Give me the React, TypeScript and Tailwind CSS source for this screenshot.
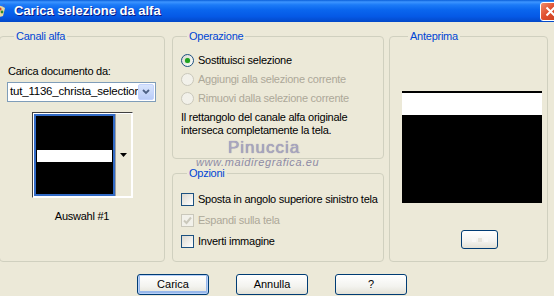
import { ReactNode } from 'react';

const ui = { fontFamily: '"Liberation Sans", Arial, sans-serif' };

function GroupBox({ title, className, children }: { title: string; className: string; children?: ReactNode }) {
  return (
    <fieldset className={`border border-[#D0D0BF] rounded-[4px] ${className}`}>
      <legend className="ml-[6px] px-[2px] text-[#0046D5] leading-[13px]">{title}</legend>
      {children}
    </fieldset>
  );
}

function Radio({ label, checked, disabled }: { label: string; checked?: boolean; disabled?: boolean }) {
  return (
    <div className="flex items-center h-[19px] gap-[4px]">
      <span
        className={`w-[13px] h-[13px] rounded-full border flex items-center justify-center ${
          disabled ? 'border-[#CAC8BB] bg-[#F2F1EA]' : 'border-[#1C5180] bg-[linear-gradient(135deg,#DCD9D0,#FFFFFF)]'
        }`}
      >
        {checked && <span className="w-[5px] h-[5px] rounded-full bg-[#21A121] shadow-[0_0_1px_#55D055]" />}
      </span>
      <span className={disabled ? 'text-[#ACA899]' : 'text-black'}>{label}</span>
    </div>
  );
}

function Check({ label, checked, disabled }: { label: string; checked?: boolean; disabled?: boolean }) {
  return (
    <div className="flex items-center h-[21px] gap-[4px]">
      <span
        className={`w-[13px] h-[13px] border flex items-center justify-center ${
          disabled ? 'border-[#CAC8BB] bg-[#F2F1EA]' : 'border-[#1C5180] bg-[linear-gradient(135deg,#DCD9D0,#FFFFFF)]'
        }`}
      >
        {checked && (
          <svg width="9" height="9" viewBox="0 0 9 9">
            <path d="M1 4.5 L3.5 7 L8 1.5" fill="none" stroke={disabled ? '#CAC8BB' : '#21A121'} strokeWidth="2" />
          </svg>
        )}
      </span>
      <span className={disabled ? 'text-[#ACA899]' : 'text-black'}>{label}</span>
    </div>
  );
}

function XpButton({ label, primary }: { label: string; primary?: boolean }) {
  return (
    <button
      className={`w-[72px] h-[21px] rounded-[3px] border border-[#003C74] bg-[linear-gradient(to_bottom,#FFFFFF,#F3F3EF_60%,#E3E1D6)] text-black leading-none ${
        primary ? 'shadow-[inset_0_0_0_1px_#B8D1F8,inset_0_-1px_0_2px_#98B8EA]' : ''
      }`}
    >
      {label}
    </button>
  );
}

export default function App() {
  return (
    <div className="relative w-[554px] h-[296px] overflow-hidden bg-[#ECE9D8] text-[11px] tracking-[-0.25px]" style={ui}>
      {/* title bar */}
      <div className="h-[22px] flex items-center justify-between tracking-normal bg-[linear-gradient(to_bottom,#0A5FD9_0%,#3D95FF_9%,#1C7BF7_22%,#0A66EE_45%,#0559E6_75%,#0348C8_100%)]">
        <div className="flex items-center">
          <svg width="12" height="14" viewBox="0 0 12 14" className="ml-[-6px]">
            <path d="M1 3 Q6 0 11 4 L9 12 Q4 14 1 10 Z" fill="#E8D9A0" />
            <circle cx="6" cy="5" r="1.6" fill="#D8402A" />
            <circle cx="8" cy="8" r="1.4" fill="#2E8A2E" />
            <path d="M8 1 L11 0 L10 3 Z" fill="#3A6BD8" />
          </svg>
          <span className="ml-[8px] text-white font-bold text-[13px] [text-shadow:1px_1px_#0A1883]">Carica selezione da alfa</span>
        </div>
        <div className="mr-[-7px] w-[21px] h-[19px] rounded-[3px] border border-white bg-[linear-gradient(135deg,#F08C6C,#E0502F_45%,#C8401E)] flex items-center justify-center">
          <svg width="11" height="11" viewBox="0 0 11 11">
            <path d="M1.5 1.5 L9.5 9.5 M9.5 1.5 L1.5 9.5" stroke="white" strokeWidth="2" />
          </svg>
        </div>
      </div>

      {/* groups */}
      <div className="flex mt-[8px] ml-[-1px]">
        <GroupBox title="Canali alfa" className="w-[166px] h-[232px] pl-[8px]">
          <div className="mt-[22px] leading-[13px]">Carica documento da:</div>
          <div className="mt-[4px] ml-[-1px] w-[149px] h-[20px] flex items-center border border-[#7F9DB9] bg-white">
            <span className="flex-1 pl-[2px] overflow-hidden whitespace-nowrap text-[11.5px] tracking-[-0.2px]">tut_1136_christa_selection</span>
            <span className="w-[16px] h-[16px] mr-[1px] rounded-[2px] bg-[linear-gradient(to_bottom,#D9E5FD,#B9CCF7)] border border-[#C3D3FD] flex items-center justify-center">
              <svg width="8" height="6" viewBox="0 0 8 6">
                <path d="M1 1 L4 4 L7 1" fill="none" stroke="#4D6185" strokeWidth="1.8" />
              </svg>
            </span>
          </div>
          <div className="mt-[10px] ml-[24px] w-[101px] h-[86px] flex border border-[#404040] border-r-white border-b-white bg-white p-[1px]">
            <div className="w-[81px] h-full border-2 border-[#316AC5] bg-black pt-[34px] px-[1px]">
              <div className="h-[12px] bg-white" />
            </div>
            <div className="flex-1 bg-[#ECE9D8] border-l border-[#A0A0A0] flex items-center justify-center">
              <svg width="7" height="4" viewBox="0 0 7 4">
                <path d="M0 0 L7 0 L3.5 4 Z" fill="black" />
              </svg>
            </div>
          </div>
          <div className="mt-[12px] ml-[-8px] text-center leading-[13px]">Auswahl #1</div>
        </GroupBox>

        <div className="ml-[7px] w-[212px] flex flex-col">
          <GroupBox title="Operazione" className="h-[129px] pl-[8px]">
            <div className="mt-[8px]">
              <Radio label="Sostituisci selezione" checked />
              <Radio label="Aggiungi alla selezione corrente" disabled />
              <Radio label="Rimuovi dalla selezione corrente" disabled />
            </div>
            <p className="mt-[3px] leading-[12.5px]">
              Il rettangolo del canale alfa originale
              <br />
              interseca completamente la tela.
            </p>
          </GroupBox>
          <GroupBox title="Opzioni" className="mt-[8px] h-[95px] pl-[8px]">
            <div className="mt-[9px] whitespace-nowrap">
              <Check label="Sposta in angolo superiore sinistro tela" />
              <Check label="Espandi sulla tela" checked disabled />
              <Check label="Inverti immagine" />
            </div>
          </GroupBox>
        </div>

        <GroupBox title="Anteprima" className="ml-[5px] w-[159px] h-[232px] pl-[12px]">
          <div className="mt-[48px] w-[140px] h-[112px] bg-black pt-[2px]">
            <div className="h-[22px] bg-white" />
          </div>
          <div className="mt-[27px] ml-[59px] w-[37px] h-[19px] rounded-[3px] border border-[#003C74] bg-[linear-gradient(to_bottom,#FFFFFF,#F3F3EF_60%,#E3E1D6)] flex items-center justify-center gap-[2px]">
            <span className="w-[4px] h-[4px] bg-[#F8F8F6]" />
            <span className="w-[4px] h-[4px] bg-[#E6E4DC]" />
            <span className="w-[4px] h-[4px] bg-[#F8F8F6]" />
          </div>
        </GroupBox>
      </div>

      {/* buttons */}
      <div className="flex mt-[12px] ml-[137px] gap-[27px] tracking-normal">
        <XpButton label="Carica" primary />
        <XpButton label="Annulla" />
        <XpButton label="?" />
      </div>

      {/* watermark */}
      <div className="absolute left-[228px] top-[135px] text-[17px] tracking-[1px] text-[#A9A6C2] [text-shadow:0_0_1px_#77748F]">
        Pinuccia
      </div>
      <div className="absolute left-[196px] top-[154px] text-[11px] tracking-[0.6px] text-[#8E8BA5] italic">
        www.maidiregrafica.eu
      </div>
    </div>
  );
}
